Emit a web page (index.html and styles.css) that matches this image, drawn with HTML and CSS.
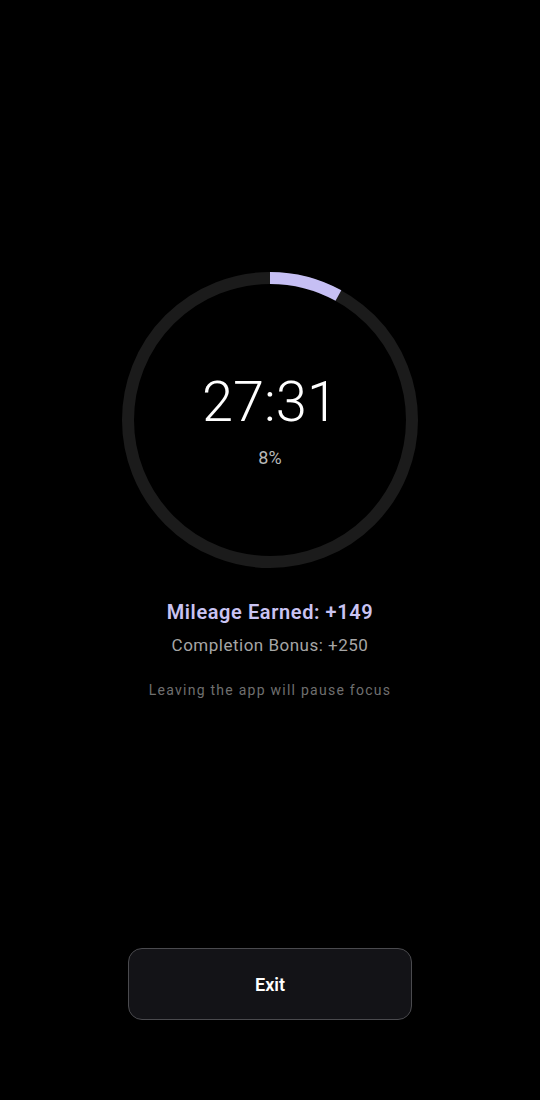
FILE: index.html
```html
<!DOCTYPE html>
<html lang="en">
<head>
    <meta charset="UTF-8">
    <meta name="viewport" content="width=device-width, initial-scale=1.0">
    <title>Focus</title>
    <link rel="stylesheet" href="styles.css">
</head>
<body>
    <main class="focus-screen">
        <div class="timer">
            <svg class="ring" width="296" height="296" viewBox="0 0 296 296">
                <circle class="ring-track" cx="148" cy="148" r="142"></circle>
                <circle class="ring-progress" cx="148" cy="148" r="142"
                        stroke-dasharray="71.4 892.2" transform="rotate(-90 148 148)"></circle>
            </svg>
            <div class="timer-text">
                <div class="time">27:31</div>
                <div class="percent">8%</div>
            </div>
        </div>

        <div class="mileage">Mileage Earned: +149</div>
        <div class="bonus">Completion Bonus: +250</div>
        <div class="hint">Leaving the app will pause focus</div>

        <button class="exit-btn">Exit</button>
    </main>
</body>
</html>
```

FILE: styles.css
```css
body {
    margin: 0;
    background: #000;
    font-family: Roboto, "Noto Sans", sans-serif;
    color: #fff;
}

.focus-screen {
    height: 1100px;
    display: flex;
    flex-direction: column;
    align-items: center;
    box-sizing: border-box;
    padding-top: 272px;
    padding-bottom: 80px;
}

.timer {
    position: relative;
    width: 296px;
    height: 296px;
}

.ring {
    display: block;
}

.ring circle {
    fill: none;
    stroke-width: 12;
}

.ring-track {
    stroke: #1b1b1b;
}

.ring-progress {
    stroke: #c6bff4;
}

.timer-text {
    position: absolute;
    inset: 0;
    display: flex;
    flex-direction: column;
    align-items: center;
    justify-content: center;
}

.time {
    font-size: 56px;
    font-weight: 300;
    line-height: 1;
    margin-top: 2px;
}

.percent {
    font-size: 18px;
    color: #b8b8b8;
    margin-top: 17px;
}

.mileage {
    margin-top: 32px;
    font-size: 20px;
    font-weight: 600;
    color: #c9c3f2;
    letter-spacing: 0.6px;
}

.bonus {
    margin-top: 11px;
    font-size: 17px;
    color: #a6a6a6;
    letter-spacing: 0.5px;
}

.hint {
    margin-top: 27px;
    font-size: 14px;
    color: #6f6f6f;
    letter-spacing: 1.25px;
}

.exit-btn {
    margin-top: auto;
    width: 284px;
    height: 72px;
    background: #131317;
    border: 1px solid #4a4a4e;
    border-radius: 14px;
    color: #fff;
    font-family: Roboto, "Noto Sans", sans-serif;
    font-size: 18px;
    font-weight: 600;
    cursor: pointer;
}
```
